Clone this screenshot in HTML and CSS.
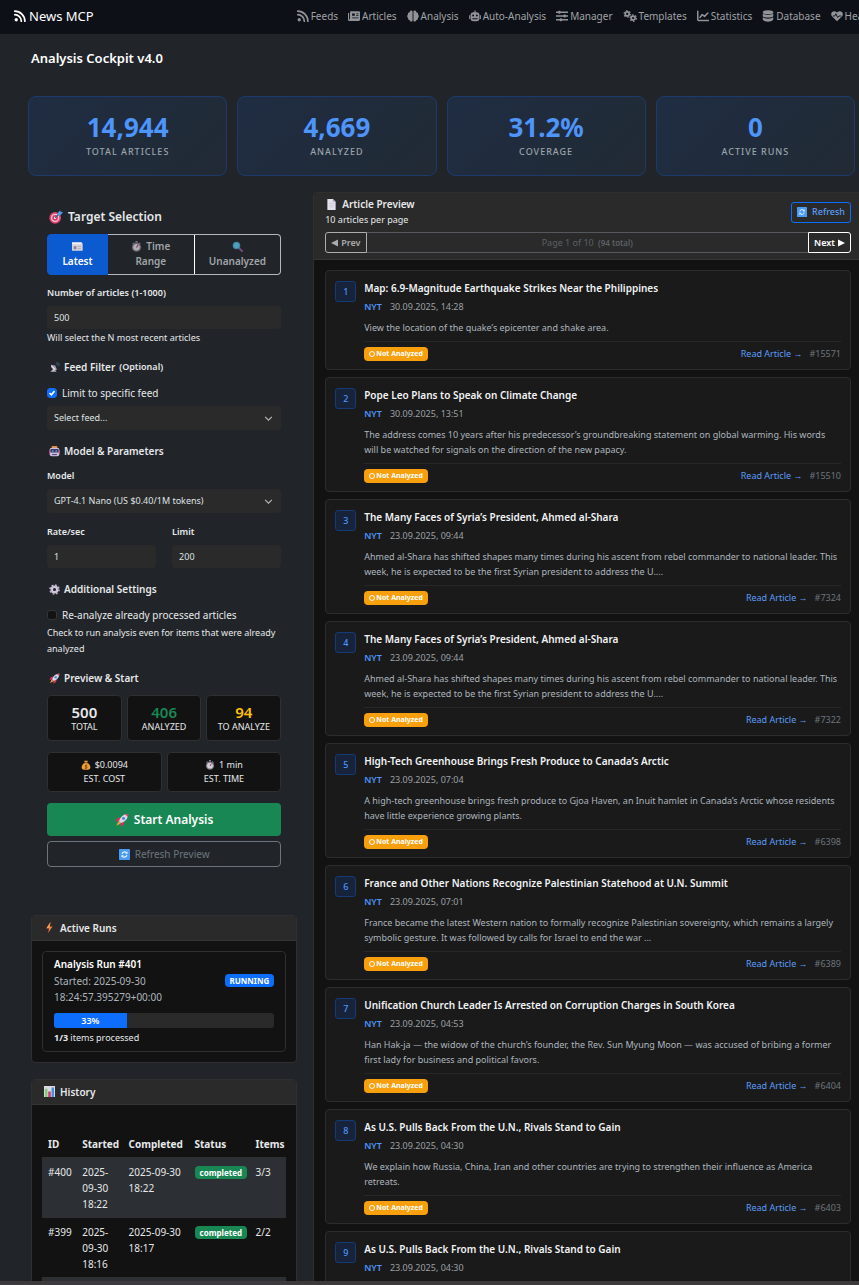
FILE: index.html
```
<!DOCTYPE html>
<html lang="en">
<head>
<meta charset="utf-8">
<meta name="viewport" content="width=device-width, initial-scale=1">
<title>News MCP - Analysis Cockpit</title>
<link rel="stylesheet" href="styles.css">
</head>
<body>
<svg class="sprite" aria-hidden="true">
  <symbol id="rss" viewBox="0 0 16 16"><circle cx="3" cy="13" r="2.2"/><path d="M1 6.2a8.8 8.8 0 0 1 8.8 8.8M1 1.5A13.5 13.5 0 0 1 14.5 15" fill="none" stroke="currentColor" stroke-width="2.3" stroke-linecap="round"/></symbol>
  <symbol id="paper" viewBox="0 0 16 16"><path fill-rule="evenodd" d="M4.500 1.500h10A1.500 1.500 0 0 1 16 3v10a1.500 1.500 0 0 1-1.500 1.500H2a2 2 0 0 1-2-2V4h1.500v8a.6.6 0 0 0 1.200 0V3.500A1.800 1.800 0 0 1 4.500 1.500zM5.500 4.500v3h3.500v-3zm5.500 0v1h3v-1zm0 2.500v1h3V7zM5.500 10v1H14v-1z"/></symbol>
  <symbol id="brain" viewBox="0 0 16 16"><path d="M7.400 1.500v13C6 16 4 15.500 3.700 13.700 1.800 13.500 1 12 1.500 10.600-.2 9.500-.1 7 1.300 6 .9 4.300 2 3 3.500 2.900 4 .7 6.300.2 7.400 1.500zM8.600 1.500v13c1.400 1.500 3.400 1 3.700-.8 1.900-.2 2.700-1.700 2.200-3.100 1.700-1.100 1.600-3.600.2-4.600.4-1.700-.7-3-2.200-3.100C12 .7 9.700.2 8.600 1.500z"/></symbol>
  <symbol id="robot" viewBox="0 0 16 16"><path fill-rule="evenodd" d="M7.200.5h1.600V3H10a4 4 0 0 1 4 4v4a4 4 0 0 1-4 4H6a4 4 0 0 1-4-4V7a4 4 0 0 1 4-4h1.200zM5.500 6a1.300 1.300 0 1 0 0 2.600 1.300 1.300 0 0 0 0-2.600zm5 0a1.300 1.300 0 1 0 0 2.600 1.300 1.300 0 0 0 0-2.600zM4.500 11v1.200h7V11zM0 7h1.200v5H0zm14.800 0H16v5h-1.200z"/></symbol>
  <symbol id="sliders" viewBox="0 0 16 16"><path d="M0 3h16M0 8h16M0 13h16" stroke="currentColor" stroke-width="1.800"/><rect x="3" y="1" width="3" height="4" rx="1"/><rect x="10" y="6" width="3" height="4" rx="1"/><rect x="5" y="11" width="3" height="4" rx="1"/></symbol>
  <symbol id="gears" viewBox="0 0 20 16"><g fill="none" stroke="currentColor"><circle cx="6" cy="5" r="2.800" stroke-width="2.400"/><circle cx="6" cy="5" r="4.600" stroke-width="1.600" stroke-dasharray="2.400 2.420"/><circle cx="14.500" cy="11" r="2.800" stroke-width="2.400"/><circle cx="14.500" cy="11" r="4.600" stroke-width="1.600" stroke-dasharray="2.400 2.420"/></g></symbol>
  <symbol id="chart" viewBox="0 0 16 16"><path d="M1 1.500v11A1.500 1.500 0 0 0 2.500 14H15.500M4 10l3-4 3 2.500L14.500 4" fill="none" stroke="currentColor" stroke-width="2" stroke-linecap="round" stroke-linejoin="round"/></symbol>
  <symbol id="database" viewBox="0 0 16 16"><ellipse cx="8" cy="3" rx="7" ry="2.700"/><path d="M1 4.800c2.500 2.300 11.500 2.300 14 0v3.400c-2.500 2.600-11.500 2.600-14 0zM1 9.800c2.500 2.300 11.500 2.300 14 0v3c-2.500 4-11.500 4-14 0z"/></symbol>
  <symbol id="heart" viewBox="0 0 16 16"><path d="M8 15 1.200 8.200C-2 4 3.500-1 8 3.300 12.500-1 18 4 14.800 8.200z"/><path d="M2.500 8H5l1.500-3 2.300 5L10.500 8h3" fill="none" stroke="#0d1017" stroke-width="1.200"/></symbol>

  <symbol id="e-target" viewBox="0 0 16 16"><circle cx="7" cy="9" r="6.700" fill="#e0446c"/><circle cx="7" cy="9" r="4.800" fill="#f3c5d3"/><circle cx="7" cy="9" r="3.200" fill="#d93866"/><circle cx="7" cy="9" r="1.300" fill="#fff"/><path d="M7 9l5-5" stroke="#35658f" stroke-width="1.300"/><path d="M9.500 4 12.500.5l1 1.500 2.500.6-3 3.400-2.500.6z" fill="#4ba0e8"/></symbol>
  <symbol id="e-news" viewBox="0 0 16 16"><path d="M0 2h14l1.500 2v10H0z" fill="#d8d3df"/><path d="M0 2h14v2.500H0z" fill="#f3f1f6"/><path d="M2.500 7.500h4V12h-4z" fill="#8a8494"/><path d="M8.500 8H13M8.500 11H13" stroke="#a39dac"/></symbol>
  <symbol id="e-clock" viewBox="0 0 16 16"><path d="M6.500 0h3v2.500h-3zM12 2l2 1.500-1 1.500-2-1.500zM4 2 2 3.500 3 5l2-1.500z" fill="#8d8797"/><circle cx="8" cy="9" r="6.700" fill="#77727f"/><circle cx="8" cy="9" r="4.700" fill="#d3cfdb"/><path d="M8 9.500l2.500-4" stroke="#a8345a" stroke-width="1.600"/></symbol>
  <symbol id="e-search" viewBox="0 0 16 16"><path d="m10 10 4.500 4.500" stroke="#8a5590" stroke-width="3" stroke-linecap="round"/><circle cx="6.500" cy="6.500" r="5.500" fill="#3f9cc4"/><circle cx="6.500" cy="6.500" r="4" fill="#5cbfe0"/></symbol>
  <symbol id="e-dish" viewBox="0 0 16 16"><path d="M7 9 11 14H2z" fill="#bdb5c7"/><path d="M3 4c-1 4 4 8.500 8.500 7z" fill="#e3deea"/><path d="M3 4 11.500 11 9 5z" fill="#aaa2b6"/><path d="M10 2.500a4 4 0 0 1 3.500 3.500M11 .5a5 5 0 0 1 4.500 4.500" stroke="#466f9f" fill="none"/></symbol>
  <symbol id="e-robot" viewBox="0 0 16 16"><path d="M4 0h8v3H4z" fill="#e08a3c"/><rect x="1" y="2.500" width="14" height="12.500" rx="3" fill="#cdbfe3"/><path d="M0 6h2v5H0zM14 6h2v5h-2z" fill="#c9507a"/><rect x="2" y="4.500" width="12" height="5" rx="1.500" fill="#343c66"/><circle cx="5.500" cy="7.200" r="1.200" fill="#6fc0f5"/><circle cx="10.500" cy="7.200" r="1.200" fill="#6fc0f5"/><path d="M4.500 12.500h7" stroke="#4f4568" stroke-width="1.500"/></symbol>
  <symbol id="e-gear" viewBox="0 0 16 16"><circle cx="8" cy="8" r="4" fill="none" stroke="#cdc3da" stroke-width="3.500"/><circle cx="8" cy="8" r="6.500" fill="none" stroke="#b9aec8" stroke-width="2.400" stroke-dasharray="2.600 2.505"/></symbol>
  <symbol id="e-rocket" viewBox="0 0 16 16"><path d="M6 5 2.500 6 .5 10 5 9zM11 10l-1 3.500-4 2L7 11z" fill="#d8305a"/><path d="M4 9.500 1.500 14.500 6.500 12z" fill="#f4a340"/><path d="M4.500 9.500C6 4 10 1 15 1c0 5-3 9-8.500 10.500z" fill="#dcd5e6"/><path d="M11.500 1.500Q13 1 15 1q0 2-.5 3.500z" fill="#e43b62"/><circle cx="9.800" cy="6.200" r="1.700" fill="#4b8ad0"/></symbol>
  <symbol id="e-money" viewBox="0 0 16 16"><path d="M5 1h6L9.500 4.500h-3z" fill="#e9a440"/><path d="M6.500 4.500h3C13 6 15 9 15 12c0 2-1.500 3.500-4 3.500H5C2.500 15.500 1 14 1 12c0-3 2-6 5.500-7.500z" fill="#eda03a"/><path d="M5 4.500h6" stroke="#8b4b2b" stroke-width="1.300"/><path d="M10 8.500H7.500a1.200 1.200 0 0 0 0 2.300h1a1.200 1.200 0 0 1 0 2.400H6M8 7.500v7" stroke="#774018" fill="none" stroke-width="1.200"/></symbol>
  <symbol id="e-refresh" viewBox="0 0 16 16"><rect width="16" height="16" rx="1" fill="#499cf2"/><path d="M4.500 7a3.700 3.700 0 0 1 6.500-1.500M11.500 9A3.700 3.700 0 0 1 5 10.500" fill="none" stroke="#fff" stroke-width="1.500"/><path d="M12.300 3.500v3.500H9zM3.700 12.500V9H7z" fill="#fff"/></symbol>
  <symbol id="e-bolt" viewBox="0 0 16 16"><path d="M9.500 0 3.500 9h3.800L6 16l6.500-9.500H8.500z" fill="#f4763c"/><path d="M9.500 0 3.500 9h3.800z" fill="#f9a04a"/></symbol>
  <symbol id="e-bars" viewBox="0 0 16 16"><rect width="16" height="16" fill="#dcd8e3"/><path d="M1.500 4h3.500v12H1.500z" fill="#7ccf6b"/><path d="M6.200 8h3.600v8H6.200z" fill="#d6336c"/><path d="M11 2h3.500v14H11z" fill="#3f8fe0"/></symbol>
  <symbol id="e-page" viewBox="0 0 16 16"><path d="M2 0h8l4 4v12H2z" fill="#e6e0ee"/><path d="m10 0 4 4h-4z" fill="#a79fb5"/><path d="M4.500 6.500h7M4.500 9h7M4.500 11.500h7" stroke="#c9c1d4"/></symbol>
</svg>

<div class="app">
  <header class="navbar">
    <a class="brand" href="#"><svg class="icon brand-icon"><use href="#rss"/></svg>News MCP</a>
    <nav class="nav">
      <a href="#"><svg class="icon"><use href="#rss"/></svg>Feeds</a>
      <a href="#"><svg class="icon"><use href="#paper"/></svg>Articles</a>
      <a href="#"><svg class="icon"><use href="#brain"/></svg>Analysis</a>
      <a href="#"><svg class="icon"><use href="#robot"/></svg>Auto-Analysis</a>
      <a href="#"><svg class="icon"><use href="#sliders"/></svg>Manager</a>
      <a href="#"><svg class="icon icon-wide"><use href="#gears"/></svg>Templates</a>
      <a href="#"><svg class="icon"><use href="#chart"/></svg>Statistics</a>
      <a href="#"><svg class="icon"><use href="#database"/></svg>Database</a>
      <a href="#"><svg class="icon"><use href="#heart"/></svg>Health</a>
    </nav>
  </header>

  <main class="main">
    <h1 class="page-title">Analysis Cockpit v4.0</h1>

    <section class="stats">
      <div class="stat"><strong>14,944</strong><span>Total Articles</span></div>
      <div class="stat"><strong>4,669</strong><span>Analyzed</span></div>
      <div class="stat"><strong>31.2%</strong><span>Coverage</span></div>
      <div class="stat"><strong>0</strong><span>Active Runs</span></div>
    </section>

    <div class="columns">
      <div class="side">
        <form class="settings">
          <h2 class="heading-lg"><svg class="emoji emoji-lg"><use href="#e-target"/></svg>Target Selection</h2>
          <div class="tabs">
            <button type="button" class="tab active"><svg class="emoji"><use href="#e-news"/></svg><span>Latest</span></button>
            <button type="button" class="tab tab-time"><span class="tab-line"><svg class="emoji"><use href="#e-clock"/></svg>Time</span><span>Range</span></button>
            <button type="button" class="tab"><svg class="emoji"><use href="#e-search"/></svg><span>Unanalyzed</span></button>
          </div>
          <label class="label" for="count">Number of articles (1-1000)</label>
          <input class="field" id="count" type="text" value="500">
          <p class="help">Will select the N most recent articles</p>

          <h3 class="heading"><svg class="emoji"><use href="#e-dish"/></svg>Feed Filter <small>(Optional)</small></h3>
          <div class="check"><input type="checkbox" id="limitfeed" checked><label for="limitfeed">Limit to specific feed</label></div>
          <select class="field feed-select" aria-label="Feed"><option>Select feed...</option></select>

          <h3 class="heading"><svg class="emoji"><use href="#e-robot"/></svg>Model &amp; Parameters</h3>
          <label class="label" for="model">Model</label>
          <select class="field" id="model"><option>GPT-4.1 Nano (US $0.40/1M tokens)</option></select>
          <div class="pair">
            <div><label class="label" for="rate">Rate/sec</label><input class="field" id="rate" type="text" value="1"></div>
            <div><label class="label" for="limit">Limit</label><input class="field" id="limit" type="text" value="200"></div>
          </div>

          <h3 class="heading"><svg class="emoji"><use href="#e-gear"/></svg>Additional Settings</h3>
          <div class="check"><input type="checkbox" id="again"><label for="again">Re-analyze already processed articles</label></div>
          <p class="help">Check to run analysis even for items that were already analyzed</p>

          <h3 class="heading"><svg class="emoji"><use href="#e-rocket"/></svg>Preview &amp; Start</h3>
          <div class="tiles">
            <div class="tile tall"><strong>500</strong><span>TOTAL</span></div>
            <div class="tile tall green"><strong>406</strong><span>ANALYZED</span></div>
            <div class="tile tall amber"><strong>94</strong><span>TO ANALYZE</span></div>
          </div>
          <div class="tiles">
            <div class="tile"><span class="tile-line"><svg class="emoji emoji-sm"><use href="#e-money"/></svg>$0.0094</span><span>EST. COST</span></div>
            <div class="tile"><span class="tile-line"><svg class="emoji emoji-sm"><use href="#e-clock"/></svg>1 min</span><span>EST. TIME</span></div>
          </div>
          <button type="button" class="start"><svg class="emoji emoji-lg"><use href="#e-rocket"/></svg>Start Analysis</button>
          <button type="button" class="refresh-preview"><svg class="emoji"><use href="#e-refresh"/></svg>Refresh Preview</button>
        </form>

        <section class="card">
          <h3 class="card-head"><svg class="emoji"><use href="#e-bolt"/></svg>Active Runs</h3>
          <div class="card-body">
            <div class="run">
              <div class="run-top">
                <div>
                  <h4>Analysis Run #401</h4>
                  <p>Started: 2025-09-30 18:24:57.395279+00:00</p>
                </div>
                <span class="badge blue">RUNNING</span>
              </div>
              <div class="progress"><div class="bar" style="width:33%">33%</div></div>
              <p class="run-items"><b>1/3</b> items processed</p>
            </div>
          </div>
        </section>

        <section class="card">
          <h3 class="card-head"><svg class="emoji"><use href="#e-bars"/></svg>History</h3>
          <div class="card-body history">
            <table>
              <colgroup><col class="c-id"><col class="c-start"><col class="c-done"><col class="c-status"><col></colgroup>
              <thead><tr><th>ID</th><th>Started</th><th>Completed</th><th>Status</th><th>Items</th></tr></thead>
              <tbody>
                <tr><td>#400</td><td>2025-09-30 18:22</td><td>2025-09-30 18:22</td><td><span class="badge">completed</span></td><td>3/3</td></tr>
                <tr><td>#399</td><td>2025-09-30 18:16</td><td>2025-09-30 18:17</td><td><span class="badge">completed</span></td><td>2/2</td></tr>
                <tr><td></td><td></td><td></td><td></td><td></td></tr>
              </tbody>
            </table>
          </div>
        </section>
      </div>

      <section class="preview">
        <header class="preview-head">
          <div class="preview-top">
            <div>
              <h2><svg class="emoji"><use href="#e-page"/></svg>Article Preview</h2>
              <p>10 articles per page</p>
            </div>
            <button type="button" class="refresh"><svg class="emoji emoji-sm"><use href="#e-refresh"/></svg>Refresh</button>
          </div>
          <div class="pager">
            <button type="button" class="prev" disabled><svg class="arrow" viewBox="0 0 8 8"><path d="M8 0v8L0 4z"/></svg>Prev</button>
            <span class="page">Page 1 of 10 <small>(94 total)</small></span>
            <button type="button" class="next">Next<svg class="arrow" viewBox="0 0 8 8"><path d="M0 0v8l8-4z"/></svg></button>
          </div>
        </header>

        <div class="articles">
          <article class="article"><span class="num">1</span><div class="content">
            <h3>Map: 6.9-Magnitude Earthquake Strikes Near the Philippines</h3>
            <div class="meta"><b>NYT</b><time>30.09.2025, 14:28</time></div>
            <p>View the location of the quake’s epicenter and shake area.</p>
            <footer><span class="badge orange"><i class="ring"></i>Not Analyzed</span><a href="#">Read Article →</a><span class="ref">#15571</span></footer>
          </div></article>
          <article class="article"><span class="num">2</span><div class="content">
            <h3>Pope Leo Plans to Speak on Climate Change</h3>
            <div class="meta"><b>NYT</b><time>30.09.2025, 13:51</time></div>
            <p>The address comes 10 years after his predecessor’s groundbreaking statement on global warming. His words will be watched for signals on the direction of the new papacy.</p>
            <footer><span class="badge orange"><i class="ring"></i>Not Analyzed</span><a href="#">Read Article →</a><span class="ref">#15510</span></footer>
          </div></article>
          <article class="article"><span class="num">3</span><div class="content">
            <h3>The Many Faces of Syria’s President, Ahmed al-Shara</h3>
            <div class="meta"><b>NYT</b><time>23.09.2025, 09:44</time></div>
            <p>Ahmed al-Shara has shifted shapes many times during his ascent from rebel commander to national leader. This week, he is expected to be the first Syrian president to address the U....</p>
            <footer><span class="badge orange"><i class="ring"></i>Not Analyzed</span><a href="#">Read Article →</a><span class="ref">#7324</span></footer>
          </div></article>
          <article class="article"><span class="num">4</span><div class="content">
            <h3>The Many Faces of Syria’s President, Ahmed al-Shara</h3>
            <div class="meta"><b>NYT</b><time>23.09.2025, 09:44</time></div>
            <p>Ahmed al-Shara has shifted shapes many times during his ascent from rebel commander to national leader. This week, he is expected to be the first Syrian president to address the U....</p>
            <footer><span class="badge orange"><i class="ring"></i>Not Analyzed</span><a href="#">Read Article →</a><span class="ref">#7322</span></footer>
          </div></article>
          <article class="article"><span class="num">5</span><div class="content">
            <h3>High-Tech Greenhouse Brings Fresh Produce to Canada’s Arctic</h3>
            <div class="meta"><b>NYT</b><time>23.09.2025, 07:04</time></div>
            <p>A high-tech greenhouse brings fresh produce to Gjoa Haven, an Inuit hamlet in Canada’s Arctic whose residents have little experience growing plants.</p>
            <footer><span class="badge orange"><i class="ring"></i>Not Analyzed</span><a href="#">Read Article →</a><span class="ref">#6398</span></footer>
          </div></article>
          <article class="article"><span class="num">6</span><div class="content">
            <h3>France and Other Nations Recognize Palestinian Statehood at U.N. Summit</h3>
            <div class="meta"><b>NYT</b><time>23.09.2025, 07:01</time></div>
            <p>France became the latest Western nation to formally recognize Palestinian sovereignty, which remains a largely symbolic gesture. It was followed by calls for Israel to end the war ...</p>
            <footer><span class="badge orange"><i class="ring"></i>Not Analyzed</span><a href="#">Read Article →</a><span class="ref">#6389</span></footer>
          </div></article>
          <article class="article"><span class="num">7</span><div class="content">
            <h3>Unification Church Leader Is Arrested on Corruption Charges in South Korea</h3>
            <div class="meta"><b>NYT</b><time>23.09.2025, 04:53</time></div>
            <p>Han Hak-ja — the widow of the church’s founder, the Rev. Sun Myung Moon — was accused of bribing a former first lady for business and political favors.</p>
            <footer><span class="badge orange"><i class="ring"></i>Not Analyzed</span><a href="#">Read Article →</a><span class="ref">#6404</span></footer>
          </div></article>
          <article class="article"><span class="num">8</span><div class="content">
            <h3>As U.S. Pulls Back From the U.N., Rivals Stand to Gain</h3>
            <div class="meta"><b>NYT</b><time>23.09.2025, 04:30</time></div>
            <p>We explain how Russia, China, Iran and other countries are trying to strengthen their influence as America retreats.</p>
            <footer><span class="badge orange"><i class="ring"></i>Not Analyzed</span><a href="#">Read Article →</a><span class="ref">#6403</span></footer>
          </div></article>
          <article class="article last"><span class="num">9</span><div class="content">
            <h3>As U.S. Pulls Back From the U.N., Rivals Stand to Gain</h3>
            <div class="meta"><b>NYT</b><time>23.09.2025, 04:30</time></div>
          </div></article>
        </div>
      </section>
    </div>
  </main>
  <div class="edge"></div>
</div>
</body>
</html>
```
FILE: styles.css
```
* { box-sizing: border-box; }
body, h1, h2, h3, h4, p { margin: 0; }
body {
  background: #212529;
  color: #e6e8ea;
  font: 10px/16px "Noto Sans", "Open Sans", sans-serif;
}
h1, h2, h3, h4 { font-size: 10px; font-weight: 600; }
a { text-decoration: none; }
button, input, select { font: inherit; }
button { cursor: pointer; }
small { font-size: 9px; }
.sprite { display: none; }

.app { display: flex; flex-direction: column; height: 100vh; overflow: hidden; }
.main { flex: 1; min-height: 0; overflow: hidden; }
.edge { flex: none; height: 4px; background: #3c3a3b; }

.icon { width: 12px; height: 12px; fill: currentColor; flex: none; }
.icon-wide { width: 14px; }
.nav .icon { opacity: 0.9; }
.emoji { width: 11px; height: 11px; flex: none; }
.emoji-lg { width: 14px; height: 14px; }
.emoji-sm { width: 10px; height: 10px; }

/* Navigation */
.navbar {
  flex: none;
  display: flex;
  align-items: center;
  gap: 203px;
  height: 34px;
  padding: 0 0 2px 14px;
  background: #0d1017;
  overflow: hidden;
  white-space: nowrap;
}
.brand { display: flex; align-items: center; gap: 3px; color: #fff; font-size: 13px; }
.nav { display: flex; gap: 10px; }
.nav a { display: flex; align-items: center; gap: 2px; color: #a0a2a5; }

/* Statistics */
.page-title { padding: 14px 31px 0; font-size: 13px; line-height: 20px; color: #fff; }
.stats {
  display: grid;
  grid-template-columns: repeat(4, 1fr);
  gap: 10px;
  margin: 28px 4px 16px 28px;
}
.stat {
  display: flex;
  flex-direction: column;
  align-items: center;
  gap: 1px;
  padding: 15px 0 14px;
  border: 1px solid #1c3a6c;
  border-radius: 8px;
  background: linear-gradient(135deg, #1f2d43, #212a34);
}
.stat strong { font-size: 26px; line-height: 30px; color: #4d94fb; }
.stat span {
  font-size: 9px;
  font-weight: 500;
  line-height: 18px;
  letter-spacing: 1px;
  text-transform: uppercase;
  color: #9ba3ab;
}

.columns {
  display: grid;
  grid-template-columns: 1fr 2.05fr;
  align-items: start;
  gap: 16px;
  margin-left: 31px;
}

/* Settings form */
.settings { padding: 15px 16px 48px; }
.heading-lg, .heading { display: flex; align-items: center; }
.heading-lg { gap: 5px; padding-left: 2px; margin-bottom: 7px; font-size: 12px; line-height: 20px; }
.heading { gap: 4px; padding-left: 2px; margin: 12px 0 8px; line-height: 18px; }
.tabs { display: flex; height: 41px; margin-bottom: 10px; }
.tab {
  flex: 1 1 0;
  display: flex;
  flex-direction: column;
  align-items: center;
  justify-content: center;
  padding: 0 0 1px;
  border: 1px solid #b5b8bb;
  background: none;
  color: #a0a4a8;
  font-weight: 600;
  line-height: 15px;
}
.tab .emoji { margin: 2px 0; opacity: 0.8; }
.tab-time { border-left: 0; border-right: 0; }
.tab-line { display: flex; align-items: center; gap: 4px; }
.tab:last-child { border-radius: 0 4px 4px 0; border-left-color: #fff; }
.tab.active { flex: 0 0 61px; border-color: #0b5ad0; border-radius: 4px 0 0 4px; background: #0b5ad0; color: #fff; }
.tab.active .emoji { opacity: 1; }
.label { display: block; margin-bottom: 5px; font-size: 9px; font-weight: 600; }
.field {
  display: block;
  width: 100%;
  height: 23px;
  padding: 0 7px;
  border: 0;
  border-radius: 4px;
  background: #2a2a2a;
  color: #dee2e6;
  font-size: 9px;
}
select.field {
  height: 24px;
  appearance: none;
  background: #2a2a2a url("data:image/svg+xml,%3Csvg xmlns='http://www.w3.org/2000/svg' viewBox='0 0 16 16'%3E%3Cpath fill='none' stroke='%23b5b8bb' stroke-width='2' d='m2 5 6 6 6-6'/%3E%3C/svg%3E") no-repeat right 8px center / 9px;
}
.feed-select { margin-top: 4px; }
.help { margin-top: 1px; font-size: 9px; }
.check { display: flex; align-items: center; gap: 5px; height: 18px; }
.check input {
  appearance: none;
  width: 10px;
  height: 10px;
  margin: 0;
  border: 1px solid #353535;
  border-radius: 3px;
  background: #121212;
}
.check input:checked {
  border-color: #0d6efd;
  background: #0d6efd url("data:image/svg+xml,%3Csvg xmlns='http://www.w3.org/2000/svg' viewBox='0 0 16 16'%3E%3Cpath fill='none' stroke='white' stroke-width='2.500' d='m4 8 3 3 5-6'/%3E%3C/svg%3E") center / 10px;
}
.pair { display: grid; grid-template-columns: 1fr 1fr; gap: 16px; margin-top: 11px; }
.tiles { display: flex; gap: 5px; margin-bottom: 11px; }
.tile {
  flex: 1 1 0;
  display: flex;
  flex-direction: column;
  align-items: center;
  padding: 5px 0;
  border: 1px solid #2f2f2f;
  border-radius: 4px;
  background: #121212;
  font-size: 9px;
  line-height: 14px;
}
.tile.tall { padding: 8px 0 6px; }
.tile strong { font-size: 15px; line-height: 16px; font-weight: 600; }
.tile-line { display: flex; align-items: center; gap: 4px; }
.green strong { color: #198754; }
.amber strong { color: #ffc107; }
.start, .refresh-preview {
  display: flex;
  align-items: center;
  justify-content: center;
  gap: 5px;
  width: 100%;
  border-radius: 4px;
}
.start { height: 33px; border: 0; background: #198754; color: #fff; font-size: 12px; font-weight: 600; }
.refresh-preview { height: 26px; margin-top: 5px; border: 1px solid #6c757d; background: none; color: #6c757d; }

/* Side cards */
.card { margin-bottom: 16px; border: 1px solid #2f2f2f; border-radius: 4px; background: #121212; overflow: hidden; }
.card-head {
  display: flex;
  align-items: center;
  gap: 5px;
  height: 25px;
  padding: 0 12px 1px;
  border-bottom: 1px solid #353535;
  background: #2a2a2a;
}
.card-body { padding: 10px; }
.run { padding: 4px 11px 5px; border: 1px solid #2f2f2f; border-radius: 4px; background: #121212; }
.run-top { display: flex; align-items: center; justify-content: space-between; gap: 40px; }
.run-top h4 { margin-bottom: 1px; color: #fff; }
.run-top p { color: #adb5bd; }
.progress { height: 15px; margin: 8px 0 2px; border-radius: 3px; background: #2a2a2a; overflow: hidden; }
.bar { height: 100%; background: #0d6efd; color: #fff; font-size: 9px; font-weight: 600; line-height: 15px; text-align: center; }
.run-items { font-size: 9px; }
.badge {
  display: inline-block;
  padding: 0 5px;
  border-radius: 4px;
  background: #198754;
  color: #fff;
  font-size: 8px;
  font-weight: 700;
  line-height: 13px;
}
.badge.blue { background: #0d6efd; }
.badge.orange { display: flex; align-items: center; gap: 1px; background: #f89f0d; font-size: 7px; line-height: 14px; }
.ring { width: 6px; height: 6px; border: 1px solid #fff; border-radius: 50%; }

.history { padding-top: 25px; }
table { width: 100%; table-layout: fixed; border-collapse: collapse; }
.c-id { width: 14%; }
.c-start { width: 19%; }
.c-done { width: 27%; }
.c-status { width: 25%; }
th, td { padding: 6px 0 5px 6px; border-bottom: 1px solid #2f2f2f; text-align: left; vertical-align: top; }
td { padding-right: 3px; }
td:empty { height: 27px; }
tbody tr:nth-child(odd) { background: #2c3034; }

/* Article preview */
.preview { border: 1px solid #2f2f2f; border-right: 0; border-radius: 4px 0 0 0; background: #121212; overflow: hidden; }
.preview-head { padding: 3px 8px 6px 11px; border-bottom: 1px solid #353535; background: #2a2a2a; }
.preview-top { display: flex; align-items: center; justify-content: space-between; }
.preview-top h2 { display: flex; align-items: center; gap: 5px; }
.preview-top h2 .emoji { margin-left: 1px; }
.preview-top p { font-size: 9px; }
.refresh, .prev, .next {
  display: flex;
  align-items: center;
  gap: 3px;
  height: 21px;
  padding: 0 5px;
  border: 1px solid;
  background: none;
  font-size: 9px;
  font-weight: 600;
}
.refresh { border-color: #0d6efd; border-radius: 3px; color: #5a9cf8; font-weight: 500; gap: 5px; }
.pager { display: flex; margin-top: 4px; }
.prev { border-color: #abadaf; border-radius: 3px 0 0 3px; color: #a9abad; cursor: default; }
.next { border-color: #fff; border-radius: 0 3px 3px 0; color: #fff; }
.page { flex: 1; border: solid #55595d; border-width: 1px 0; color: #5b6065; font-size: 9px; line-height: 19px; text-align: center; }
.page small { margin-left: 2px; font-size: 8px; font-weight: 600; }
.arrow { width: 7px; height: 8px; fill: currentColor; }

.articles { display: grid; gap: 7px; padding: 10px 8px 10px 11px; }
.article {
  display: flex;
  align-items: flex-start;
  gap: 8px;
  padding: 10px 9px 8px;
  border: 1px solid #2c2c2c;
  border-radius: 4px;
  background: #1a1a1a;
}
.last { height: 115px; }
.num {
  flex: none;
  width: 21px;
  height: 21px;
  border: 1px solid #153a75;
  border-radius: 3px;
  background: #17233a;
  color: #4d94fb;
  font-size: 9px;
  font-weight: 500;
  line-height: 19px;
  text-align: center;
}
.content { flex: 1; min-width: 0; }
.content h3 { line-height: 14px; color: #f1f3f5; }
.meta { display: flex; gap: 8px; margin: 6px 0 7px; font-size: 9px; line-height: 12px; color: #9aa0a6; }
.meta b { font-weight: 600; color: #4d94fb; }
.content p { font-size: 9px; line-height: 15px; color: #adb5bd; }
.content footer {
  display: flex;
  align-items: center;
  gap: 7px;
  margin-top: 6px;
  padding-top: 5px;
  border-top: 1px solid #272727;
  font-size: 9px;
  line-height: 14px;
}
.content footer .badge { margin-right: auto; }
.content footer a { color: #5a9cf8; }
.ref { color: #6c757d; }
```
